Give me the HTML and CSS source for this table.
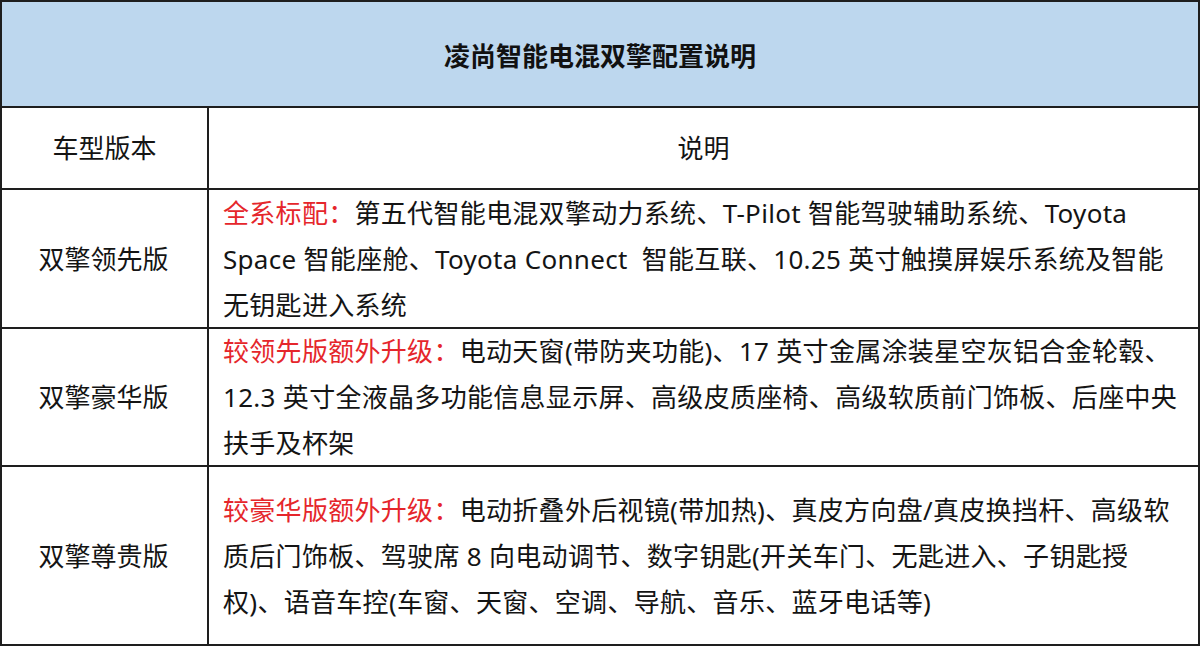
FILE: index.html
```html
<!DOCTYPE html>
<html lang="zh-CN">
<head>
<meta charset="utf-8">
<title>凌尚智能电混双擎配置说明</title>
<link rel="stylesheet" href="styles.css">
</head>
<body>
<div class="table">
  <div class="cell title">凌尚智能电混双擎配置说明</div>
  <div class="cell head">车型版本</div>
  <div class="cell head">说明</div>

  <div class="cell name r2">双擎领先版</div>
  <div class="cell desc r2">
    <div class="line"><span class="red">全系标配：</span>第五代智能电混双擎动力系统、T-Pilot 智能驾驶辅助系统、Toyota</div>
    <div class="line">Space 智能座舱、Toyota Connect&nbsp; 智能互联、10.25 英寸触摸屏娱乐系统及智能</div>
    <div class="line">无钥匙进入系统</div>
  </div>

  <div class="cell name r3">双擎豪华版</div>
  <div class="cell desc r3">
    <div class="line"><span class="red">较领先版额外升级：</span>电动天窗(带防夹功能)、17 英寸金属涂装星空灰铝合金轮毂、</div>
    <div class="line">12.3 英寸全液晶多功能信息显示屏、高级皮质座椅、高级软质前门饰板、后座中央</div>
    <div class="line">扶手及杯架</div>
  </div>

  <div class="cell name r4">双擎尊贵版</div>
  <div class="cell desc r4">
    <div class="line"><span class="red">较豪华版额外升级：</span>电动折叠外后视镜(带加热)、真皮方向盘/真皮换挡杆、高级软</div>
    <div class="line">质后门饰板、驾驶席 8 向电动调节、数字钥匙(开关车门、无匙进入、子钥匙授</div>
    <div class="line">权)、语音车控(车窗、天窗、空调、导航、音乐、蓝牙电话等)</div>
  </div>
</div>
</body>
</html>
```

FILE: styles.css
```css
html, body {
  margin: 0;
  padding: 0;
  background: #ffffff;
}

body {
  width: 1200px;
  height: 646px;
  overflow: hidden;
  font-family: "Noto Sans", "Noto Sans CJK SC", sans-serif;
  color: #141414;
}

.table {
  display: grid;
  grid-template-columns: 205px 989px;
  grid-template-rows: 104px 80px 137px 136px 177px;
  gap: 2px;
  padding: 2px;
  background: #1e1e1e;
  width: 1200px;
  height: 646px;
  box-sizing: border-box;
}

.cell {
  background: #ffffff;
  display: flex;
  align-items: center;
  font-size: 26px;
  line-height: 46px;
}

.title {
  grid-column: 1 / -1;
  background: #bdd7ee;
  justify-content: center;
  font-weight: 700;
  font-size: 26px;
  color: #111111;
  padding-top: 3px;
}

.head,
.name {
  justify-content: center;
}

.name {
  padding-right: 2px;
}

.desc {
  flex-direction: column;
  align-items: flex-start;
  justify-content: center;
  padding-left: 14px;
  letter-spacing: 0.3px;
}

.line {
  white-space: nowrap;
}

.red {
  color: #e5262b;
}
```
